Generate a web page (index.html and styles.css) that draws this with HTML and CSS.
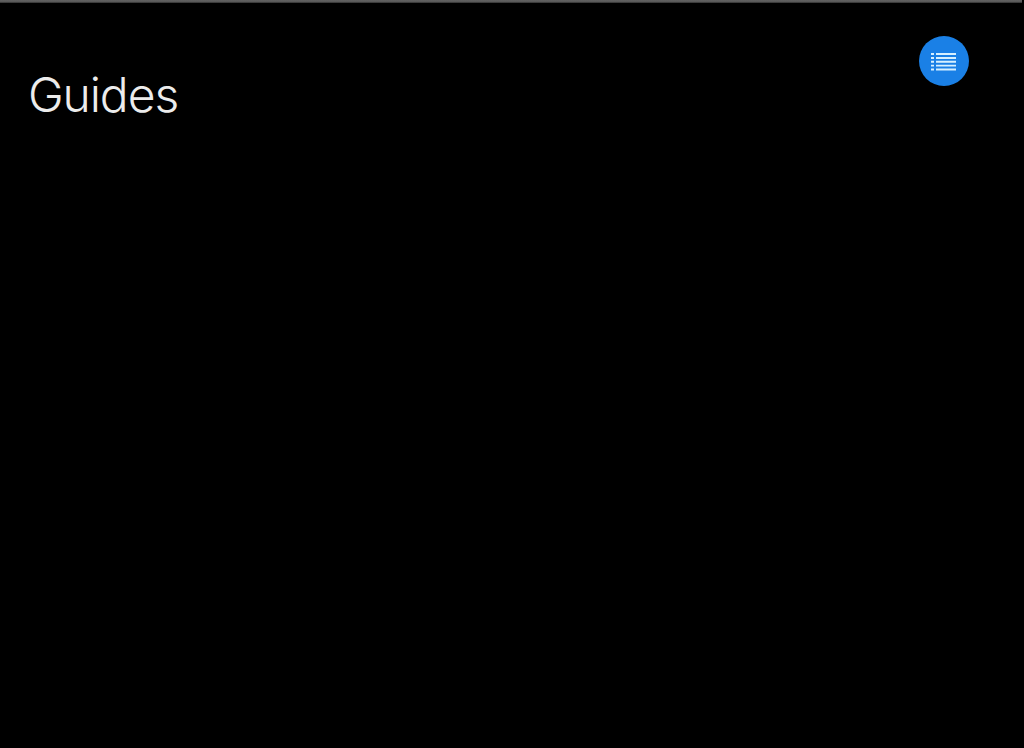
FILE: index.html
```
<!DOCTYPE html>
<html lang="en">
<head>
  <meta charset="utf-8">
  <title>Guides</title>
  <link rel="stylesheet" href="styles.css">
</head>
<body>

<div class="top-line"></div>

<header class="header">
  <h1 class="title">Guides</h1>
  <button class="menu-btn" aria-label="Menu">
    <svg width="26" height="18" viewBox="0 0 26 18">
      <path d="M0 1h3M0 5h3M0 8.7h3M0 12.6h3M0 16.5h3M5 1h20M5 5h20M5 8.7h20M5 12.6h20M5 16.5h20" stroke="#d6f0ff" stroke-width="1.9"/>
    </svg>
  </button>
</header>

</body>
</html>
```

FILE: styles.css
```
body {
  margin: 0;
  background: #000;
  font-family: Inter, "Liberation Sans", sans-serif;
}

.top-line {
  height: 3px;
  margin-right: 2px;
  background: linear-gradient(#626262, #5a5a5a 50%, #2e2e2e);
}

.header {
  display: flex;
  justify-content: space-between;
  align-items: flex-start;
  padding: 33px 55px 0 28px;
}

.title {
  margin: 30px 0 0;
  font-size: 48px;
  line-height: 58px;
  font-weight: 300;
  letter-spacing: -1.1px;
  color: #ececec;
}

.menu-btn {
  display: flex;
  align-items: center;
  justify-content: center;
  width: 50px;
  height: 50px;
  padding: 1px 0 0;
  border: none;
  border-radius: 50%;
  background: #1a80e6;
  cursor: pointer;
}
```
